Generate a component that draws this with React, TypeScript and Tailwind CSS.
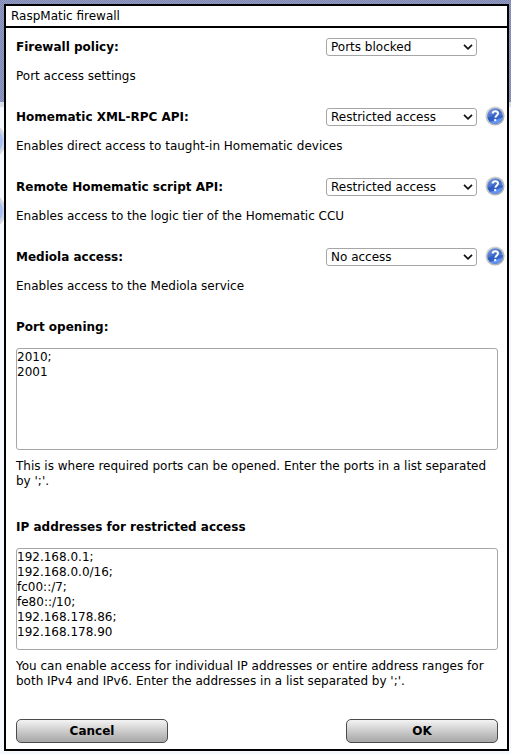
import { useId } from "react";

type Access = { label: string; value: string; options: string[]; description: string; help: boolean };

const accessOptions = ["Full access", "Restricted access", "No access"];

const settings: Access[] = [
  {
    label: "Firewall policy:",
    value: "Ports blocked",
    options: ["Ports open", "Ports blocked"],
    description: "Port access settings",
    help: false,
  },
  {
    label: "Homematic XML-RPC API:",
    value: "Restricted access",
    options: accessOptions,
    description: "Enables direct access to taught-in Homematic devices",
    help: true,
  },
  {
    label: "Remote Homematic script API:",
    value: "Restricted access",
    options: accessOptions,
    description: "Enables access to the logic tier of the Homematic CCU",
    help: true,
  },
  {
    label: "Mediola access:",
    value: "No access",
    options: accessOptions,
    description: "Enables access to the Mediola service",
    help: true,
  },
];

function HelpIcon() {
  const id = useId();
  return (
    <svg viewBox="0 0 20 20" className="size-5" aria-hidden="true">
      <defs>
        <linearGradient id={`${id}ring`} x1="0" y1="0" x2="1" y2="1">
          <stop offset="0" stopColor="#dedede" />
          <stop offset="0.5" stopColor="#c3c3c6" />
          <stop offset="1" stopColor="#a3a5ab" />
        </linearGradient>
        <linearGradient id={`${id}ball`} x1="0" y1="0" x2="0.7" y2="1">
          <stop offset="0" stopColor="#8ea6dc" />
          <stop offset="0.5" stopColor="#3f6bcb" />
          <stop offset="1" stopColor="#6a9bff" />
        </linearGradient>
      </defs>
      <circle cx="10" cy="10" r="9.6" fill={`url(#${id}ring)`} />
      <circle cx="10" cy="10" r="7.8" fill={`url(#${id}ball)`} />
      <path d="M2.3 11.5C6 12 8 9.5 11 9.200C14 9 16 9.500 17.700 9A7.800 7.800 0 0 1 4.500 15.500Z" fill="#1e4cb4" opacity="0.55" />
      <path d="M5 15.800C9 15.500 13 13 17.500 11.500A7.800 7.800 0 0 1 5 15.800Z" fill="#6fa0ff" opacity="0.8" />
      <path
        d="M7.500 7.500C7.800 6 8.800 5.300 10.300 5.300C12.100 5.300 13 6.200 13 7.500C13 9.300 10.500 9.500 10.300 11.700"
        fill="none"
        stroke="#fff"
        strokeWidth="2"
      />
      <circle cx="10.200" cy="14.100" r="1.200" fill="#fff" />
    </svg>
  );
}

function Setting({ label, value, options, description, help }: Access) {
  const id = useId();
  return (
    <div className="mb-6">
      <div className="flex h-[18px] items-center">
        <label htmlFor={id} className="grow font-bold">
          {label}
        </label>
        <div className="grid w-[151px] items-center">
          <select
            id={id}
            defaultValue={value}
            className="col-start-1 row-start-1 h-[18px] w-full appearance-none rounded-[3px] border border-[#a6a6a6] bg-white pl-1 leading-4"
          >
            {options.map((o) => (
              <option key={o}>{o}</option>
            ))}
          </select>
          <svg
            viewBox="0 0 10 6"
            className="pointer-events-none col-start-1 row-start-1 mr-1 h-1.5 w-2.5 justify-self-end"
            aria-hidden="true"
          >
            <path d="M1 0.800L5 4.800L9 0.800" fill="none" stroke="#111" strokeWidth="1.700" />
          </svg>
        </div>
        <div className="flex w-[30px] justify-end pr-0.5 pb-0.5">
          {help && (
            <button type="button" aria-label={`Help for ${label}`}>
              <HelpIcon />
            </button>
          )}
        </div>
      </div>
      <p className="mt-[13px]">{description}</p>
    </div>
  );
}

function ListField({ label, value, note }: { label: string; value: string; note: string }) {
  const id = useId();
  return (
    <div className="mr-[9px]">
      <label htmlFor={id} className="block leading-[18px] font-bold">
        {label}
      </label>
      <textarea
        id={id}
        defaultValue={value}
        className="mt-3 block h-[102px] w-full resize-none rounded-[3px] border border-[#a6a6a6] bg-white pt-px"
      />
      <p className="mt-[9px]">{note}</p>
    </div>
  );
}

function DialogButton({ children }: { children: string }) {
  return (
    <button
      type="button"
      className="h-6 w-[152px] rounded-[5px] border border-[#4c4c4c] bg-linear-to-b from-[#f4f4f4] to-[#a6a6a6] font-bold"
    >
      {children}
    </button>
  );
}

export default function App() {
  return (
    <div className="relative isolate min-h-screen bg-[#f5f8fd] pt-1 pr-0.5 pb-[3px] pl-1 font-['DejaVu_Sans',Verdana,sans-serif] text-[12px] leading-[15px] text-black">
      <div className="absolute inset-x-0 top-0 -z-10 h-[102px] bg-[#8891ba] bg-[repeating-conic-gradient(#959dc2_0_25%,#7b85b2_0_50%)] bg-size-[2px_2px]" />
      <div className="absolute inset-x-0 top-[102px] -z-10 h-[5px] bg-[#d9dfe9]" />
      <div className="absolute inset-y-0 left-0 -z-10 w-1 overflow-hidden">
        <div className="absolute top-[123px] -left-[30px] size-[36px] rounded-full border-3 border-[#d4d8e2] bg-[#a8c0f5]" />
        <div className="absolute top-[193px] -left-[30px] size-[36px] rounded-full border-3 border-[#d4d8e2] bg-[#a8c0f5]" />
      </div>
      <main className="border-2 border-black bg-white">
        <h1 className="border-b-2 border-black px-[5px] pt-[3px] pb-0.5">RaspMatic firewall</h1>
        <form className="pt-2.5 pb-1.5 pl-2.5" onSubmit={(e) => e.preventDefault()}>
          {settings.map((s) => (
            <Setting key={s.label} {...s} />
          ))}
          <div className="space-y-[29px]">
            <ListField
              label="Port opening:"
              value={"2010;\n2001"}
              note="This is where required ports can be opened. Enter the ports in a list separated by ';'."
            />
            <ListField
              label="IP addresses for restricted access"
              value={"192.168.0.1;\n192.168.0.0/16;\nfc00::/7;\nfe80::/10;\n192.168.178.86;\n192.168.178.90"}
              note="You can enable access for individual IP addresses or entire address ranges for both IPv4 and IPv6. Enter the addresses in a list separated by ';'."
            />
          </div>
          <div className="mt-[30px] mr-[9px] flex justify-between">
            <DialogButton>Cancel</DialogButton>
            <DialogButton>OK</DialogButton>
          </div>
        </form>
      </main>
    </div>
  );
}
